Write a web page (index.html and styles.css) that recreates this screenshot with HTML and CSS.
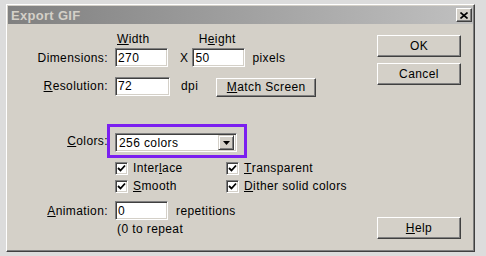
FILE: index.html
```html
<!DOCTYPE html>
<html lang="en">
<head>
    <meta charset="UTF-8">
    <title>Export GIF</title>
    <link rel="stylesheet" href="styles.css">
</head>
<body>
    <div class="dialog">
        <div class="titlebar">
            <span class="title">Export GIF</span>
            <button class="close" type="button">
                <svg width="8" height="7" viewBox="0 0 8 7">
                    <path d="M0.5 0.5 L7.5 6.5 M7.5 0.5 L0.5 6.5" stroke="#000" stroke-width="1.6" fill="none"/>
                </svg>
            </button>
        </div>
        <div class="content">
            <div class="form">
                <div class="row header-row">
                    <span class="label"></span>
                    <span class="col-head width-head"><u>W</u>idth</span>
                    <span class="col-head height-head">H<u>e</u>ight</span>
                </div>
                <div class="row dim-row">
                    <span class="label">Dimensions:</span>
                    <input class="field" type="text" value="270">
                    <span class="times">X</span>
                    <input class="field" type="text" value="50">
                    <span class="unit pixels">pixels</span>
                </div>
                <div class="row res-row">
                    <span class="label"><u>R</u>esolution:</span>
                    <input class="field wide" type="text" value="72">
                    <span class="unit dpi">dpi</span>
                    <button class="btn match" type="button"><u>M</u>atch Screen</button>
                </div>
                <div class="row colors-row">
                    <span class="label"><u>C</u>olors:</span>
                    <div class="highlight">
                        <div class="select">
                            <span class="select-text">256 colors</span>
                            <span class="select-arrow">
                                <svg width="7" height="4" viewBox="0 0 7 4"><path d="M0 0 H7 L3.5 4 Z" fill="#000"/></svg>
                            </span>
                        </div>
                    </div>
                </div>
                <div class="row check-row">
                    <span class="label"></span>
                    <label class="check first"><span class="box"><svg width="9" height="9" viewBox="0 0 9 9"><path d="M1 4 L3.5 6.5 L8 1.5" stroke="#000" stroke-width="1.8" fill="none"/></svg></span>Inter<u>l</u>ace</label>
                    <label class="check"><span class="box"><svg width="9" height="9" viewBox="0 0 9 9"><path d="M1 4 L3.5 6.5 L8 1.5" stroke="#000" stroke-width="1.8" fill="none"/></svg></span><u>T</u>ransparent</label>
                </div>
                <div class="row check-row">
                    <span class="label"></span>
                    <label class="check first"><span class="box"><svg width="9" height="9" viewBox="0 0 9 9"><path d="M1 4 L3.5 6.5 L8 1.5" stroke="#000" stroke-width="1.8" fill="none"/></svg></span><u>S</u>mooth</label>
                    <label class="check"><span class="box"><svg width="9" height="9" viewBox="0 0 9 9"><path d="M1 4 L3.5 6.5 L8 1.5" stroke="#000" stroke-width="1.8" fill="none"/></svg></span><u>D</u>ither solid colors</label>
                </div>
                <div class="row anim-row">
                    <span class="label"><u>A</u>nimation:</span>
                    <input class="field" type="text" value="0">
                    <span class="unit reps">repetitions</span>
                </div>
                <div class="row note-row">
                    <span class="label"></span>
                    <span class="note">(0 to repeat</span>
                </div>
            </div>
            <div class="buttons">
                <button class="btn side" type="button">OK</button>
                <button class="btn side" type="button">Cancel</button>
                <button class="btn side help" type="button"><u>H</u>elp</button>
            </div>
        </div>
    </div>
</body>
</html>
```

FILE: styles.css
```css
body {
    margin: 0;
    background-color: #dcdcdc;
    font-family: "Liberation Sans", Arial, sans-serif;
    font-size: 12px;
    letter-spacing: 0.4px;
    color: #000;
}
.dialog {
    box-sizing: border-box;
    width: 469px;
    height: 248px;
    margin: 4px 0 0 6px;
    padding: 1px;
    background-color: #d4d0c8;
    border: 1px solid;
    border-color: #fff #404040 #404040 #fff;
    box-shadow: inset -1px -1px #808080;
    display: flex;
    flex-direction: column;
}
.titlebar {
    height: 18px;
    background: linear-gradient(to right, #808080, #c0c0c0);
    display: flex;
    align-items: center;
    padding: 0 1px 0 3px;
}
.title {
    flex: 1;
    font-weight: bold;
    font-size: 13px;
    letter-spacing: 0.3px;
    color: #d4d0c8;
}
.close {
    width: 16px;
    height: 14px;
    padding: 0;
    background-color: #d4d0c8;
    border: 1px solid;
    border-color: #fff #404040 #404040 #fff;
    box-shadow: inset -1px -1px #808080;
    display: flex;
    align-items: center;
    justify-content: center;
}
.content {
    flex: 1;
    display: flex;
}
.form {
    flex: 1;
    padding-top: 8px;
}
.row {
    display: flex;
    align-items: center;
    line-height: 14px;
}
.label {
    width: 100px;
    flex-shrink: 0;
    text-align: right;
    margin-right: 7px;
    white-space: nowrap;
}
.header-row {
    height: 14px;
}
.width-head {
    margin-left: 2px;
}
.height-head {
    margin-left: 49px;
}
.dim-row {
    margin-top: 2px;
    height: 19px;
}
.field {
    box-sizing: border-box;
    width: 53px;
    height: 19px;
    padding: 0 2px;
    margin: 0;
    font-family: inherit;
    font-size: 12px;
    letter-spacing: 0.4px;
    background-color: #fff;
    border: 1px solid;
    border-color: #808080 #fff #fff #808080;
    box-shadow: inset 1px 1px #404040, inset -1px -1px #d4d0c8;
    outline: none;
}
.field.wide {
    width: 55px;
}
.times {
    margin: 0 4px 0 12px;
}
.pixels {
    margin-left: 7px;
}
.res-row {
    margin-top: 9px;
    height: 20px;
}
.dpi {
    margin-left: 11px;
}
.btn {
    box-sizing: border-box;
    padding: 0;
    font-family: inherit;
    font-size: 12px;
    letter-spacing: 0.4px;
    color: #000;
    background-color: #d4d0c8;
    border: 1px solid;
    border-color: #fff #404040 #404040 #fff;
    box-shadow: inset -1px -1px #808080;
}
.match {
    width: 100px;
    height: 19px;
    margin: 2px 0 0 18px;
}
.colors-row {
    margin-top: 28px;
}
.highlight {
    margin-left: -8px;
    padding: 6px 7px 3px 5px;
    border: 3px solid #7b1ff0;
}
.select {
    box-sizing: border-box;
    width: 122px;
    height: 19px;
    background-color: #fff;
    border: 1px solid;
    border-color: #808080 #fff #fff #808080;
    box-shadow: inset 1px 1px #404040, inset -1px -1px #d4d0c8;
    display: flex;
    align-items: center;
    padding: 2px 2px 2px 3px;
}
.select-text {
    flex: 1;
}
.select-arrow {
    box-sizing: border-box;
    width: 16px;
    height: 15px;
    background-color: #d4d0c8;
    border: 1px solid;
    border-color: #d4d0c8 #404040 #404040 #d4d0c8;
    box-shadow: inset 1px 1px #fff, inset -1px -1px #808080;
    display: flex;
    align-items: center;
    justify-content: center;
}
.check-row {
    height: 18px;
}
.check-row + .check-row {
    margin-top: 0;
}
.colors-row + .check-row {
    margin-top: 1px;
}
.check {
    display: flex;
    align-items: center;
    white-space: nowrap;
}
.check.first {
    width: 111px;
}
.box {
    box-sizing: border-box;
    width: 13px;
    height: 13px;
    margin-right: 5px;
    background-color: #fff;
    border: 1px solid;
    border-color: #808080 #fff #fff #808080;
    box-shadow: inset 1px 1px #404040, inset -1px -1px #d4d0c8;
    display: flex;
    align-items: center;
    justify-content: center;
}
.anim-row {
    margin-top: 6px;
    height: 19px;
}
.reps {
    margin-left: 8px;
}
.note-row {
    margin-top: 2px;
}
.note {
    margin-left: 2px;
}
.buttons {
    width: 84px;
    margin-right: 12px;
    padding: 11px 0 11px;
    display: flex;
    flex-direction: column;
    gap: 6px;
}
.side {
    height: 22px;
}
.help {
    margin-top: auto;
}
```
